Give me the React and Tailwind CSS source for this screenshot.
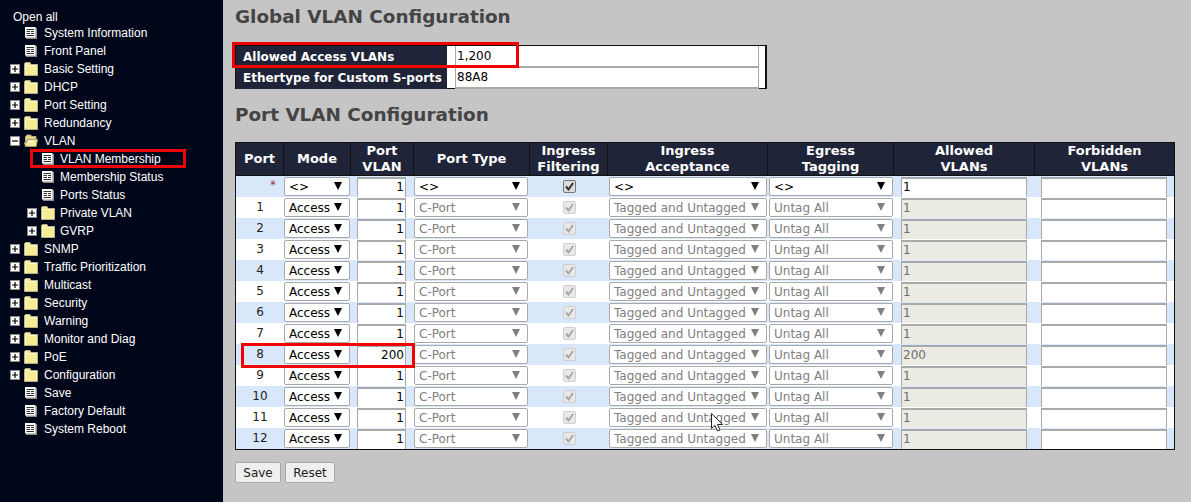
const BODY_FONT = "font-['DejaVu_Sans',Verdana,sans-serif]";

const menu = [
  { label: 'System Information', icon: 'doc' },
  { label: 'Front Panel', icon: 'doc' },
  { label: 'Basic Setting', icon: 'folder', toggle: '+' },
  { label: 'DHCP', icon: 'folder', toggle: '+' },
  { label: 'Port Setting', icon: 'folder', toggle: '+' },
  { label: 'Redundancy', icon: 'folder', toggle: '+' },
  { label: 'VLAN', icon: 'open', toggle: '-' },
  { label: 'VLAN Membership', icon: 'doc', sub: true, active: true },
  { label: 'Membership Status', icon: 'doc', sub: true },
  { label: 'Ports Status', icon: 'doc', sub: true },
  { label: 'Private VLAN', icon: 'folder', toggle: '+', sub: true },
  { label: 'GVRP', icon: 'folder', toggle: '+', sub: true },
  { label: 'SNMP', icon: 'folder', toggle: '+' },
  { label: 'Traffic Prioritization', icon: 'folder', toggle: '+' },
  { label: 'Multicast', icon: 'folder', toggle: '+' },
  { label: 'Security', icon: 'folder', toggle: '+' },
  { label: 'Warning', icon: 'folder', toggle: '+' },
  { label: 'Monitor and Diag', icon: 'folder', toggle: '+' },
  { label: 'PoE', icon: 'folder', toggle: '+' },
  { label: 'Configuration', icon: 'folder', toggle: '+' },
  { label: 'Save', icon: 'doc' },
  { label: 'Factory Default', icon: 'doc' },
  { label: 'System Reboot', icon: 'doc' },
];

const DocIcon = () => (
  <svg width="12" height="12" viewBox="0 0 12 12" className="shrink-0 ml-[1px]">
    <rect x="1" y="1" width="11" height="11" fill="#8c8c8c" />
    <rect x="0" y="0" width="10.5" height="10.5" fill="#fff" />
    <path d="M1.5 2.5h7.5M1.5 4.5h7.5M1.5 6.5h7.5M1.5 8.5h7.5" stroke="#333" strokeWidth="1" fill="none" />
    <path d="M5.5 4v3" stroke="#fff" strokeWidth="1" fill="none" />
  </svg>
);

const FolderIcon = () => (
  <svg width="14" height="14" viewBox="0 0 14 14" className="shrink-0">
    <path d="M0.5 13.5V1.5L1.5 0.5H6L7 2.5H13.5V13.5Z" fill="#f6ec94" stroke="#b5b090" />
    <path d="M1.5 12.5V3.5H12.5" fill="none" stroke="#fbf7cc" />
  </svg>
);

const OpenFolderIcon = () => (
  <svg width="14" height="14" viewBox="0 0 14 14" className="shrink-0">
    <path d="M1.5 12V2.5L3 1H6.5L8 2.5H12V12Z" fill="#e6d87a" stroke="#b5b090" />
    <path d="M3.5 5.5H13.5L12 12.5H1.5L0.5 8.5H3Z" fill="#f6ec94" stroke="#a5a080" />
    <path d="M4 7.5H10" stroke="#fff" strokeWidth="1.2" />
  </svg>
);

const Toggle = ({ kind }) => (
  <svg width="10" height="10" viewBox="0 0 10 10" className="shrink-0">
    <rect x="0.5" y="0.5" width="9" height="9" fill="#fff" stroke="#8a8a8a" />
    <path d={kind === '+' ? 'M2 5h6M5 2v6' : 'M2 5h6'} stroke="#000" strokeWidth="1.2" />
  </svg>
);

function MenuRow({ item }) {
  const Icon = item.icon === 'doc' ? DocIcon : item.icon === 'open' ? OpenFolderIcon : FolderIcon;
  return (
    <li className={`relative flex items-center h-[18px] ${item.sub ? 'pl-[27px]' : 'pl-[10px]'}`}>
      <span className="w-[14px] shrink-0">{item.toggle && <Toggle kind={item.toggle} />}</span>
      <span className={`shrink-0 ${item.sub ? 'w-[19px]' : 'w-[20px]'}`}><Icon /></span>
      <span className="whitespace-nowrap">{item.label}</span>
      {item.active && <span className="absolute left-[30px] top-[-1px] w-[156px] h-[19px] border-[3px] border-[#f00000]" />}
    </li>
  );
}

function Select({ value, disabled, className }) {
  return (
    <div className={`relative h-[19px] ${className}`}>
      <select
        disabled={disabled}
        defaultValue={value}
        className={`block w-full h-full appearance-none bg-white rounded-[2px] border border-[#a9a9a9] pl-[4px] text-[12px] opacity-100 ${disabled ? 'text-[#808080]' : 'text-black'}`}
      >
        <option>{value}</option>
      </select>
      <svg width="8" height="8" viewBox="0 0 8 8" className="absolute right-[8px] top-[5px]">
        <path d="M0 0H8L4 8Z" fill={disabled ? '#808080' : '#000'} />
      </svg>
    </div>
  );
}

function TextInput({ value, disabled, right, className }) {
  return (
    <input
      readOnly
      disabled={disabled}
      value={value}
      className={`block h-[20px] border border-[#a9a9a9] border-t-2 border-b-0 px-[1px] pb-[1px] text-[12px] ${right ? 'text-right' : ''} ${disabled ? 'bg-[#ebebe4] text-[#6d6d6d]' : 'bg-white text-black'} ${className}`}
    />
  );
}

function Check({ disabled }) {
  return (
    <span className={`mx-auto flex items-center justify-center w-[13px] h-[13px] rounded-[2px] border ${disabled ? 'border-[#cfcfcf] bg-[#e9e9e9]' : 'border-[#767676] bg-[#dcdcdc]'}`}>
      <svg width="9" height="9" viewBox="0 0 9 9">
        <path d="M1 4.5L3.5 7.5L8 1" fill="none" stroke={disabled ? '#a8a8a8' : '#333'} strokeWidth="2" />
      </svg>
    </span>
  );
}

const rows = Array.from({ length: 13 }, (_, i) => ({
  port: i === 0 ? '*' : String(i),
  mode: i === 0 ? '<>' : 'Access',
  pvid: i === 8 ? '200' : '1',
  type: i === 0 ? '<>' : 'C-Port',
  accept: i === 0 ? '<>' : 'Tagged and Untagged',
  egress: i === 0 ? '<>' : 'Untag All',
  allowed: i === 8 ? '200' : '1',
  disabled: i !== 0,
}));

const headers = [
  ['Port'],
  ['Mode'],
  ['Port', 'VLAN'],
  ['Port Type'],
  ['Ingress', 'Filtering'],
  ['Ingress', 'Acceptance'],
  ['Egress', 'Tagging'],
  ['Allowed', 'VLANs'],
  ['Forbidden', 'VLANs'],
];

const colWidths = ['w-[48px]', 'w-[67px]', 'w-[63px]', 'w-[116px]', 'w-[78px]', 'w-[160px]', 'w-[126px]', 'w-[141px]', 'w-[139px]'];

export default function App() {
  return (
    <div className={`flex h-screen overflow-hidden bg-[#c5c5c5] ${BODY_FONT}`}>
      <aside className="w-[223px] shrink-0 bg-[#00061a] pt-[7px] text-[12px] text-white font-['Liberation_Sans',Arial,sans-serif]">
        <div className="pl-[13px] h-[17px] leading-[20px]">Open all</div>
        <ul>
          {menu.map(item => <MenuRow key={item.label} item={item} />)}
        </ul>
      </aside>

      <main className="relative flex-1 pl-[12px]">
        <h1 className="pt-[5px] h-[45px] text-[18.4px] leading-[24px] font-bold text-[#444]">Global VLAN Configuration</h1>

        <div className="relative w-[532px] h-[44px] border border-r-2 border-[#111] bg-white text-[12px]">
          <div className="flex h-[22px]">
            <div className="w-[211px] h-[21px] bg-[#1f2439] pl-[7px] font-bold leading-[22px] text-white">Allowed Access VLANs</div>
            <TextInput value="1,200" className="ml-[8px] w-[304px] !h-[22px] !border-t-0 !border-b-2" />
          </div>
          <div className="flex h-[21px]">
            <div className="w-[211px] h-[21px] bg-[#1f2439] pl-[7px] font-bold leading-[20px] text-white whitespace-nowrap">Ethertype for Custom S-ports</div>
            <TextInput value="88A8" className="ml-[8px] w-[304px] !h-[21px] !border-t-0 !border-b-2" />
          </div>
          <span className="absolute left-[-4px] top-[-4px] w-[287px] h-[26px] border-[3px] border-[#f00000]" />
        </div>

        <h2 className="pt-[14px] h-[53px] text-[18.4px] leading-[24px] font-bold text-[#444]">Port VLAN Configuration</h2>

        <div className="relative w-[940px]">
          <table className="table-fixed w-[940px] border-separate border-spacing-0 border border-[#111] text-[12px] text-center">
            <colgroup>
              {colWidths.map((w, i) => <col key={i} className={w} />)}
            </colgroup>
            <thead>
              <tr className="h-[33px] bg-[#1f2439] text-white text-[13px]">
                {headers.map((lines, i) => (
                  <th key={i} className={`p-0 font-bold leading-[16px] border-b border-[#111] ${i < 8 ? 'border-r' : ''}`}>
                    {lines.map(l => <div key={l}>{l}</div>)}
                  </th>
                ))}
              </tr>
            </thead>
            <tbody>
              {rows.map((r, i) => (
                <tr key={i} className={`h-[21px] ${i % 2 === 0 ? 'bg-[#d9e7fb]' : 'bg-white'}`}>
                  <td className={`p-0 pb-[1px] ${i === 0 ? 'text-[#a04040] text-right pr-[8px] align-top' : 'text-[#222]'}`}>{r.port}</td>
                  <td className="p-0"><Select value={r.mode} className="w-[66px]" /></td>
                  <td className="p-0"><TextInput value={r.pvid} right className="ml-[6px] w-[49px] text-[#222]" /></td>
                  <td className="p-0"><Select value={r.type} disabled={r.disabled} className="w-[114px]" /></td>
                  <td className="p-0"><Check disabled={r.disabled} /></td>
                  <td className="p-0"><Select value={r.accept} disabled={r.disabled} className="ml-[1px] w-[158px]" /></td>
                  <td className="p-0"><Select value={r.egress} disabled={r.disabled} className="ml-[1px] w-[124px]" /></td>
                  <td className="p-0"><TextInput value={r.allowed} disabled={r.disabled} className="ml-[7px] w-[126px]" /></td>
                  <td className="p-0"><TextInput value="" className="ml-[6px] w-[126px]" /></td>
                </tr>
              ))}
            </tbody>
          </table>
          <span className="absolute left-[6px] top-[201px] w-[174px] h-[25px] border-[3px] border-[#f00000]" />
          <svg width="13" height="19" viewBox="0 0 13 19" className="absolute left-[476px] top-[271px]">
            <path d="M0.5 0.5V15.5L4 12.5L6.5 18L9 17L6.5 11.5H11.5Z" fill="#fff" stroke="#222" />
          </svg>
        </div>

        <div className="flex gap-[4px] mt-[12px] text-[12px] text-[#222]">
          <button className="w-[46px] h-[21px] rounded-[2px] border border-[#a9a9a9] bg-[#efefef]">Save</button>
          <button className="w-[50px] h-[21px] rounded-[2px] border border-[#a9a9a9] bg-[#efefef]">Reset</button>
        </div>
      </main>
    </div>
  );
}
